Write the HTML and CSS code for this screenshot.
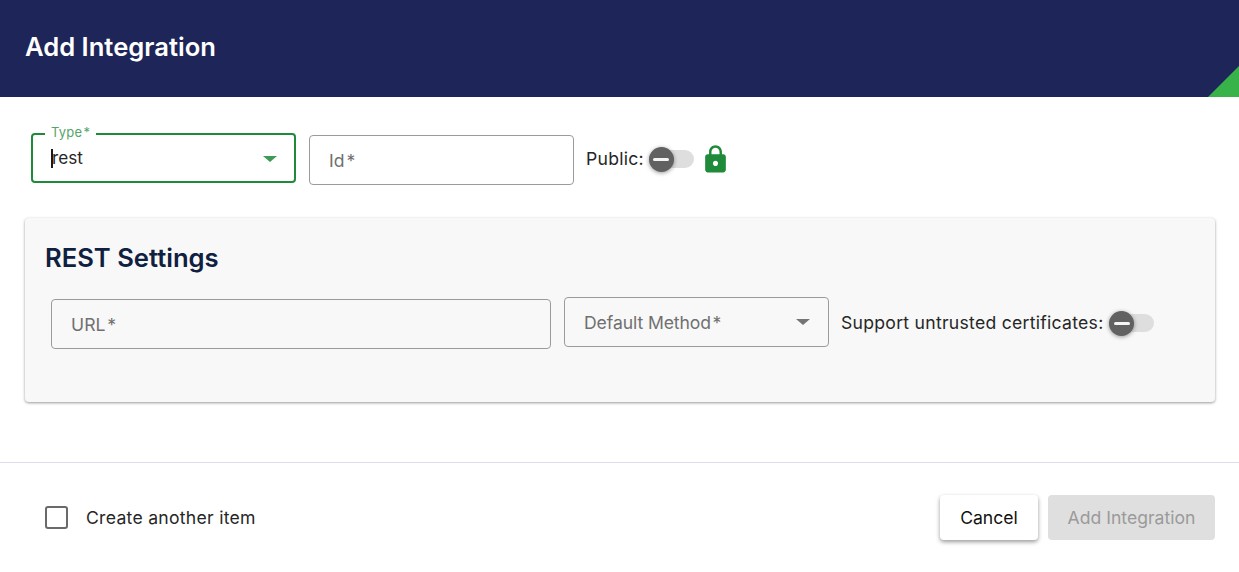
FILE: index.html
```html
<!DOCTYPE html>
<html lang="en">
<head>
<meta charset="utf-8">
<title>Add Integration</title>
<link rel="stylesheet" href="styles.css">
</head>
<body>
<header class="header">
  <h1 class="title">Add Integration</h1>
  <span class="corner"></span>
</header>
<main class="form">
  <div class="top-row">
    <div class="field field-focus">
      <span class="legend">Type&#8202;*</span>
      <span class="caret"></span><span class="value">rest</span>
      <span class="arrow arrow-green"></span>
    </div>
    <div class="field field-id"><span class="placeholder">Id&#8202;*</span></div>
    <span class="label label-public">Public:</span>
    <span class="toggle"><span class="thumb"><span class="minus"></span></span></span>
    <svg class="lock" viewBox="0 0 24 24" width="31" height="31" aria-hidden="true"><path fill="#1e8a3a" d="M18 8h-1V6c0-2.76-2.24-5-5-5S7 3.24 7 6v2H6c-1.1 0-2 .9-2 2v10c0 1.1.9 2 2 2h12c1.1 0 2-.9 2-2V10c0-1.1-.9-2-2-2zm-6 9c-1.1 0-2-.9-2-2s.9-2 2-2 2 .9 2 2-.9 2-2 2zm3.1-9H8.9V6c0-1.71 1.39-3.1 3.1-3.1 1.71 0 3.1 1.39 3.1 3.1v2z"/></svg>
  </div>
  <section class="card">
    <h2 class="card-title">REST Settings</h2>
    <div class="card-row">
      <div class="field field-url"><span class="placeholder">URL&#8202;*</span></div>
      <div class="field field-method"><span class="placeholder placeholder-tight">Default Method&#8202;*</span><span class="arrow"></span></div>
      <span class="label label-support">Support untrusted certificates:</span>
      <span class="toggle"><span class="thumb"><span class="minus"></span></span></span>
    </div>
  </section>
</main>
<footer class="footer">
  <label class="check">
    <span class="box"></span>
    <span class="label">Create another item</span>
  </label>
  <div class="actions">
    <button class="btn btn-cancel" type="button">Cancel</button>
    <button class="btn btn-add" type="button" disabled>Add Integration</button>
  </div>
</footer>
</body>
</html>
```
FILE: styles.css
```css
* { box-sizing: border-box; }
html, body { margin: 0; padding: 0; }
body {
  width: 1239px;
  height: 572px;
  overflow: hidden;
  background: #fff;
  font-family: Inter, "Liberation Sans", sans-serif;
  color: #262626;
}
.header {
  position: relative;
  height: 97px;
  background: #1e2558;
  display: flex;
  align-items: center;
  padding: 0 0 4px 25px;
  overflow: hidden;
}
.title {
  margin: 0;
  font-size: 25.6px;
  font-weight: 600;
  color: #fff;
}
.corner {
  position: absolute;
  right: 0;
  bottom: 0;
  width: 31px;
  height: 31px;
  background: #37b34a;
  clip-path: polygon(100% 0, 100% 100%, 0 100%);
}
.form { padding: 36px 24px 0 25px; }
.top-row {
  display: flex;
  align-items: center;
  height: 52px;
  padding-left: 6px;
}
.field {
  position: relative;
  display: flex;
  align-items: center;
  height: 50px;
  width: 265px;
  background: transparent;
  border: 1px solid #9b9b9b;
  border-radius: 4px;
  padding-left: 19px;
  font-size: 17.6px;
}
.field-focus {
  border: 2px solid #1e8a3a;
  margin-bottom: 2px;
  padding-left: 18px;
}
.field-id { margin: 2px 12px 0 13px; }
.legend {
  position: absolute;
  top: -10px;
  left: 12px;
  padding: 0 6px;
  background: #fff;
  font-size: 13px;
  line-height: 14px;
  letter-spacing: 0.2px;
  color: #55a568;
}
.value { color: #262626; font-size: 17.2px; margin-top: -2px; }
.caret {
  width: 2px;
  height: 19px;
  margin-right: -1px;
  background: #1a1a1a;
}
.placeholder { color: #707070; letter-spacing: 0.1px; }
.placeholder-tight { letter-spacing: -0.1px; }
.arrow {
  position: absolute;
  right: 18px;
  top: 50%;
  margin-top: -3px;
  width: 0;
  height: 0;
  border-left: 7px solid transparent;
  border-right: 7px solid transparent;
  border-top: 6.5px solid #757575;
}
.arrow-green { border-top-color: #3f9a55; right: 17px; margin-top: -2px; }
.label { font-size: 17.6px; letter-spacing: 0.27px; color: #262626; white-space: nowrap; }
.label-public { margin-right: 5px; margin-top: -1px; }
.toggle {
  position: relative;
  display: inline-block;
  width: 45px;
  height: 18px;
  border-radius: 9px;
  background: #dedede;
  flex: none;
}
.thumb {
  position: absolute;
  left: 0;
  top: -3px;
  width: 25px;
  height: 25px;
  border-radius: 50%;
  background: #616161;
  box-shadow: 0 1px 4px rgba(0, 0, 0, 0.4);
  display: flex;
  align-items: center;
  justify-content: center;
}
.minus {
  width: 16px;
  height: 3px;
  border-radius: 1.5px;
  background: #f4f4f4;
}
.lock { margin-left: 6px; flex: none; }
.card {
  height: 184px;
  margin-top: 33px;
  background: #f8f8f8;
  border-radius: 4px;
  box-shadow: 0 1px 3px rgba(0, 0, 0, 0.4);
  padding: 24px 20px 0;
}
.card-title {
  margin: 0;
  font-size: 25.6px;
  line-height: 32px;
  font-weight: 600;
  color: #0f2040;
}
.card-row {
  display: flex;
  align-items: center;
  margin-top: 23px;
  padding-left: 6px;
}
.field-url { width: 500px; margin-top: 2px; }
.field-method { margin: 0 0 2px 13px; }
.label-support { margin: 0 6px 2px 12px; }
.footer {
  margin-top: 60px;
  height: 110px;
  border-top: 1px solid #dcdcec;
  display: flex;
  align-items: center;
  justify-content: space-between;
  padding: 0 24px 0 45px;
}
.check { display: flex; align-items: center; }
.box {
  width: 23px;
  height: 23px;
  border: 2px solid #6a6a6a;
  border-radius: 3px;
  margin-right: 18px;
}
.actions { display: flex; gap: 10px; }
.btn {
  height: 45px;
  border: 0;
  border-radius: 4px;
  font: 400 17.6px Inter, "Liberation Sans", sans-serif;
}
.btn-cancel {
  width: 98px;
  background: #fff;
  color: #111;
  box-shadow: 0 2px 4px rgba(0, 0, 0, 0.4);
}
.btn-add {
  width: 167px;
  background: #dfdfdf;
  color: #9a9a9a;
}
```
